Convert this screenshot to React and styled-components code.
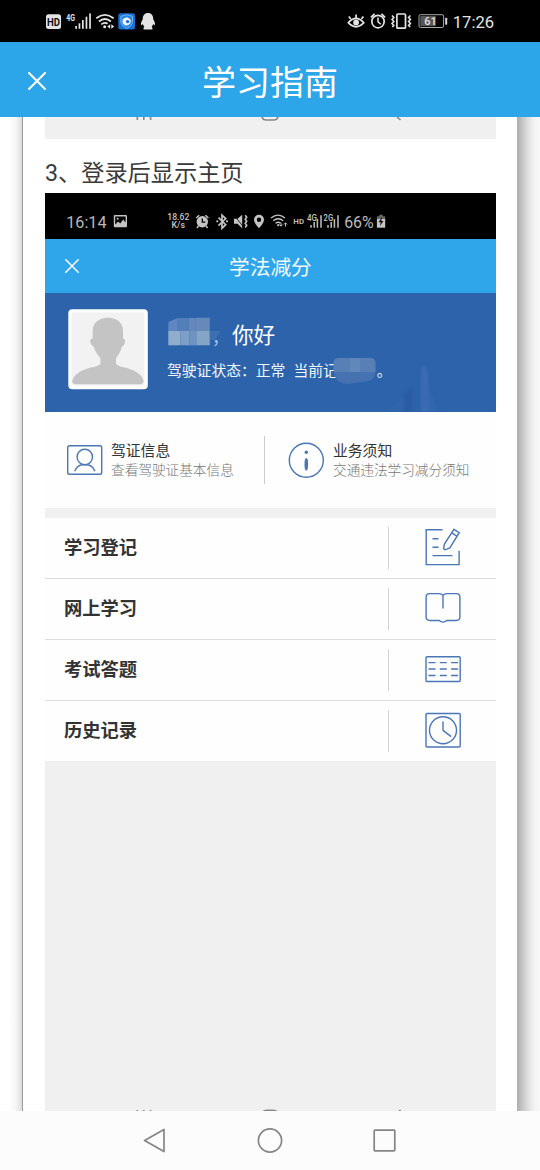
import React from 'react';
import styled, { createGlobalStyle } from 'styled-components';

const GlobalStyle = createGlobalStyle`
  * {
    box-sizing: border-box;
  }
  body {
    margin: 0;
    background: #fcfcfc;
    font-family: Roboto, "Noto Sans CJK SC", sans-serif;
  }
`;

const menuItems = [
  { label: '学习登记', icon: <RegisterIcon /> },
  { label: '网上学习', icon: <BookIcon /> },
  { label: '考试答题', icon: <ExamIcon /> },
  { label: '历史记录', icon: <ClockIcon /> },
];

function App() {
  return (
    <Screen>
      <GlobalStyle />
      <PhoneStatus />
      <Header>
        <CloseIcon size={18} thick={2} />
        <Title>学习指南</Title>
      </Header>
      <Viewport>
        <LeftShade />
        <Paper>
          <PreviousShot>
            <ShotNav viewBox="45 117 451 22" width="451" height="22">
              <path d="M137.3 117v3M143.8 117v3M150.6 117v3" />
              <path d="M262 117q1 3 4 3h8q3 0 4-3" />
              <path d="M397 117l3.5 3" />
            </ShotNav>
          </PreviousShot>
          <Step>3、登录后显示主页</Step>
          <Shot>
            <ShotStatus />
            <ShotHeader>
              <CloseIcon size={14} thick={1.5} />
              <ShotTitle>学法减分</ShotTitle>
            </ShotHeader>
            <Profile>
              <Avatar />
              <ProfileText>
                <Greeting>
                  <NameMosaic />
                  <Comma>，</Comma>
                  <span>你好</span>
                </Greeting>
                <Licence>
                  <span>驾驶证状态：正常</span>
                  <Score>当前记</Score>
                  <ScoreMosaic />
                  <span>。</span>
                </Licence>
              </ProfileText>
              <Tower viewBox="380 360 60 52" width="60" height="52">
                <path d="M383 412l10-6 8-8 5-2v16z" fill="#2f65ab" />
                <path d="M404 412v-18l8-6v24z" fill="#2a5ba3" />
                <path d="M421 412v-42l4-6 3 8 1 40z" fill="#3a6cb2" />
                <path d="M429 412v-24l4 10 5 14z" fill="#3266ae" />
              </Tower>
            </Profile>
            <Infos>
              <Info>
                <LicenceIcon />
                <div>
                  <InfoTitle>驾证信息</InfoTitle>
                  <InfoSub>查看驾驶证基本信息</InfoSub>
                </div>
              </Info>
              <InfoDivider />
              <Info>
                <NoticeIcon />
                <div>
                  <InfoTitle>业务须知</InfoTitle>
                  <InfoSub>交通违法学习减分须知</InfoSub>
                </div>
              </Info>
            </Infos>
            <Menu>
              {menuItems.map((item) => (
                <MenuRow key={item.label}>
                  <MenuLabel>{item.label}</MenuLabel>
                  <MenuIcon>{item.icon}</MenuIcon>
                </MenuRow>
              ))}
            </Menu>
            <ShotRest>
              <ShotNav viewBox="45 1105 451 6" width="451" height="6">
                <path d="M137.3 1110v1.5M143.8 1110v1.5M150.6 1110v1.5" />
                <path d="M263 1111.5q2-1.3 5-1.3h4q3 0 5 1.3" />
                <path d="M399 1111.5l1.5-1.5" />
              </ShotNav>
            </ShotRest>
          </Shot>
        </Paper>
        <RightShade />
      </Viewport>
      <NavBar>
        <svg viewBox="142 1127 26 28" width="26" height="28">
          <path d="M164 1129.4v22.2L144.6 1140.5z" />
        </svg>
        <svg viewBox="256 1127 28 28" width="28" height="28">
          <circle cx="270" cy="1140.5" r="11.6" />
        </svg>
        <svg viewBox="371 1127 28 28" width="28" height="28">
          <rect x="374.2" y="1130.2" width="20.6" height="20.6" rx="0.8" />
        </svg>
      </NavBar>
    </Screen>
  );
}

function CloseIcon({ size, thick }) {
  return (
    <svg viewBox="0 0 18 18" width={size} height={size}>
      <path
        d="M1 1l16 16M17 1L1 17"
        stroke="#fff"
        strokeWidth={(thick * 18) / size}
        strokeLinecap="round"
      />
    </svg>
  );
}

// Status bar of the phone itself
function PhoneStatus() {
  return (
    <StatusBar>
      <svg viewBox="40 8 120 26" width="120" height="26">
        <rect x="46" y="14.3" width="15" height="14.7" rx="2.5" fill="#e4e4e4" />
        <StatusText x="47" y="25.5" fill="#111" $size={10.5} $weight={700} textLength="13">HD</StatusText>
        <StatusText x="66.3" y="20.7" $size={9.5} $weight={700} textLength="8.7">4G</StatusText>
        <g fill="#e4e4e4">
          <rect x="75.3" y="26" width="1.7" height="2.8" />
          <rect x="78.6" y="23.3" width="1.7" height="5.5" />
          <rect x="82" y="20" width="1.7" height="8.8" />
          <rect x="85.6" y="16.7" width="1.7" height="12.1" />
          <rect x="89.2" y="13.4" width="1.7" height="15.4" />
          <circle cx="104.7" cy="26.8" r="1.5" />
          <path d="M107.3 26.5l2.9-2.3v4.6zM114.2 26.5l-2.9-2.3v4.6z" />
          <path d="M148 13c3.5 0 5.300 2.600 5.300 6.400 1.400 2.100 2 4.300 1.500 5.600-.4.500-1-.1-1.600-.9-.3 1.200-.9 2-1.600 2.800 1.300.6 1.500 2.600-.6 2.600h-6c-2.100 0-1.900-2-.6-2.600-.7-.8-1.300-1.600-1.600-2.800-.6.800-1.200 1.400-1.600.9-.5-1.300.1-3.500 1.500-5.600 0-3.800 1.800-6.400 5.300-6.400z" />
        </g>
        <g stroke="#e4e4e4" strokeWidth="1.8" fill="none">
          <path d="M96.3 18.2q8.5-6.7 17.3 0" />
          <path d="M98.9 21.5q6-4.9 12 0" />
          <path d="M101.3 24.4q3.5-2.7 6.3-.6" />
        </g>
        <rect x="118.3" y="13.2" width="16.7" height="16.4" rx="2.5" fill="#1870d5" />
        <path d="M126.7 14.7l5.8 1.6v6.2q-.5 3.8-5.8 6.100-5.300-2.300-5.800-6.100v-6.200z" fill="#2582e5" stroke="#8fc0f4" strokeWidth=".8" />
        <path d="M122.4 21.3q0-2.800 2.400-3.300l2.200-.8 2.200 1.300 1.800 1.800-.7 3q-2 2.700-4.900 2.200-3-1.200-3-4.200z" fill="#eef6ff" />
        <circle cx="127.6" cy="21.6" r="1.7" fill="#1870d5" />
      </svg>
      <svg viewBox="342 8 158 26" width="158" height="26">
        <g stroke="#e4e4e4" strokeWidth="1.7" fill="none">
          <path d="M348.3 22.7q7.7-8.6 15.5 0-7.8 8.2-15.5 0z" />
          <path d="M356.1 18v-3.400M350.8 19l-2-2.600M361.4 19l2-2.600" />
          <circle cx="378" cy="21.6" r="6.2" />
          <path d="M378 17.5v4.3l2.8 2.5" strokeWidth="1.5" />
          <path d="M370.9 17.3l3.6-3.4M385.1 17.3l-3.6-3.4" />
          <rect x="396.9" y="14" width="8.6" height="14.2" rx="1" />
          <path d="M392 15.5l1.8 2-1.8 2 1.8 2-1.8 2 1.8 2-1.6 1.5M410.4 15.5l-1.8 2 1.8 2-1.8 2 1.8 2-1.8 2 1.6 1.5" strokeWidth="1.6" />
        </g>
        <circle cx="356.1" cy="22.5" r="2.9" fill="#e4e4e4" />
        <rect x="419" y="14.7" width="24.6" height="12.8" rx="1.5" fill="none" stroke="#a8a8a8" />
        <rect x="420.3" y="16" width="15.5" height="10.2" fill="#565656" />
        <rect x="445.2" y="17.7" width="2" height="7" rx=".6" fill="#d8d8d8" />
        <StatusText x="424.3" y="25.4" $size={11.5} $weight={500} textLength="12.5">61</StatusText>
        <StatusText x="452.8" y="27.5" $size={16.7} textLength="41.3">17:26</StatusText>
      </svg>
    </StatusBar>
  );
}

// Status bar inside the embedded screen
function ShotStatus() {
  return (
    <ShotStatusBar>
      <svg viewBox="60 208 72 26" width="72" height="26">
        <StatusText x="66.2" y="227.6" $size={16.5} fill="#b9b9b9" textLength="40.3">16:14</StatusText>
        <path d="M115 215h10.8q1.2 0 1.2 1.2v9.9q0 1.2-1.2 1.2H115q-1.2 0-1.2-1.2v-9.9q0-1.2 1.2-1.2zm.2 1.6v8l3-3.2 2 2 3-4 2.4 3.2v-6z" fill="#c4c4c4" fillRule="evenodd" />
        <circle cx="117.6" cy="218.8" r="1" fill="#c4c4c4" />
      </svg>
      <svg viewBox="160 208 230 26" width="230" height="26">
        <StatusText x="167.3" y="220.2" $size={8.5} $weight={500} fill="#c4c4c4" textLength="22">18.62</StatusText>
        <StatusText x="171.5" y="228.3" $size={8.5} $weight={500} fill="#c4c4c4" textLength="13.5">K/s</StatusText>
        <circle cx="202.3" cy="221.8" r="5.7" fill="#c4c4c4" />
        <path d="M202.3 218.5v3.6h3" stroke="#000" strokeWidth="1.3" fill="none" />
        <path d="M196.2 218l3-2.8M208.4 218l-3-2.8M198.5 226l-1.5 2M206.1 226l1.5 2" stroke="#c4c4c4" strokeWidth="1.5" />
        <path d="M218.5 217.7l7.2 7-3.7 3.5v-13l3.7 3.4-7.2 7" stroke="#c4c4c4" strokeWidth="1.7" fill="none" />
        <circle cx="217.3" cy="221.3" r="1.1" fill="#c4c4c4" />
        <circle cx="227" cy="221.3" r="1.1" fill="#c4c4c4" />
        <path d="M234 218.8h3.5l4.7-4v13.4l-4.7-4.4H234z" fill="#c4c4c4" />
        <path d="M234 215l9.5 12" stroke="#000" strokeWidth=".8" />
        <path d="M245.2 215.3l1.5 2-1.5 2 1.5 2-1.5 2 1.5 2-1.5 2.2" stroke="#c4c4c4" strokeWidth="1.6" fill="none" />
        <path d="M259 214.7a5 5 0 015 5c0 3.4-5 8.4-5 8.4s-5-5-5-8.4a5 5 0 015-5zm0 2.9a2.2 2.2 0 100 4.4 2.2 2.2 0 000-4.4z" fill="#c4c4c4" />
        <g stroke="#c4c4c4" strokeWidth="1.4" fill="none">
          <path d="M271 218q7-5.8 14 0M273.2 220.7q5-3.9 10 0M275.5 223.3q2.8-2 5 0" />
          <path d="M281 222.5v3.5m-1.5-1.4l1.5 1.6 1.5-1.6M285.5 226.5v-3.5m-1.5 1.4l1.5-1.6 1.5 1.6" strokeWidth="1" />
        </g>
        <circle cx="278.2" cy="225.2" r="1.1" fill="#c4c4c4" />
        <StatusText x="293.3" y="224" $size={8} $weight={700} fill="#b9b9b9" textLength="10.8">HD</StatusText>
        <StatusText x="307" y="220.8" $size={8.7} $weight={500} fill="#c4c4c4" textLength="10">4G</StatusText>
        <path d="M311 225v2.7M314.2 222v5.7M317.4 219v8.7M321 215.3v12.4" stroke="#b4b4b4" strokeWidth="1.6" />
        <StatusText x="323.6" y="220.8" $size={8.7} $weight={500} fill="#c4c4c4" textLength="9.5">2G</StatusText>
        <path d="M328 225v2.7M331.2 222v5.7M334.4 219v8.7M338 215.3v12.4" stroke="#b4b4b4" strokeWidth="1.6" />
        <StatusText x="344.2" y="227.6" $size={16.5} fill="#b9b9b9" textLength="29.5">66%</StatusText>
        <path d="M379.3 214.7h3.5v1.5h2.4v3.5h-8.3v-3.500h2.400z" fill="#666" />
        <path d="M376.9 219h8.3v8.7h-8.3z" fill="#c4c4c4" />
        <path d="M382 217l-3.5 5.3h2.2l-.8 3.7 3.6-5h-2.2z" fill="#111" />
      </svg>
    </ShotStatusBar>
  );
}

function Avatar() {
  return (
    <svg viewBox="68 309 80 81" width="80" height="81">
      <rect x="68.3" y="309.3" width="79.5" height="80" rx="4" fill="#fff" />
      <rect x="71.5" y="312.5" width="73" height="73" rx="2" fill="#f2f2f2" />
      <path
        d="M108 317.7c9 0 14.8 5 15 12.5v8.3c2.5.6 2.6 2.7 1.6 5-.7 1.7-1.4 2.5-2.4 2.8-1.5 5.2-4 9-6.2 12.2v5.3c2.5 3.2 7.5 3 13 5 7.5 2.500 12.800 6.200 14.300 11.200.8 2.800-.8 4.200-3.500 4.200H76.500c-2.900 0-4.800-1.400-4-4.200 1.700-5 7-8.700 14.500-11.200 5.500-2 11-1.800 13.500-5v-5.300c-2.400-3.200-5.500-7-7-12.200-1-.3-2-1.100-2.700-2.800-1-2.300-1-4.400 1.900-5v-8.300c.2-7.500 6.300-12.500 15.300-12.500z"
        fill="#c4c4c4"
      />
    </svg>
  );
}

function NameMosaic() {
  return (
    <svg viewBox="168 317 53 29" width="53" height="29">
      <path d="M168.3 322l9.5-4v13h-9.5z" fill="#5f86c0" />
      <path d="M177.8 318h11v13h-11z" fill="#547eb9" />
      <path d="M188.8 318h7v13h-7z" fill="#6488bd" />
      <path d="M195.8 317.7h14v13.3h-14z" fill="#6689b9" />
      <path d="M168.3 331h12v14.3h-12z" fill="#91adcd" />
      <path d="M180.3 331h9v14.3h-9z" fill="#7d9fc7" />
      <path d="M189.3 331h7v14.3h-7z" fill="#6e93c1" />
      <path d="M196.3 331h13.5v14.3h-13.5z" fill="#85a5c7" />
      <path d="M209.8 331h11l-6 9h-5z" fill="#3d70b1" />
    </svg>
  );
}

function ScoreMosaic() {
  return (
    <MosaicOver viewBox="333 358 44 28" width="44" height="28">
      <path d="M333.5 364q0-5 5-5h32q5 0 5 5v9h-42z" fill="#5880b6" />
      <path d="M350 359h10v14h-10z" fill="#6287ba" />
      <path d="M333.5 373h42q-1 8-7 9l-22 3q-11-1-13-12z" fill="#4672b1" />
    </MosaicOver>
  );
}

function LicenceIcon() {
  return (
    <LineIcon viewBox="66 441 38 38" width="38" height="38">
      <rect x="67.7" y="445.7" width="34" height="28.6" rx="1.8" />
      <circle cx="84.8" cy="457" r="7.7" />
      <path d="M74.7 471.3q2.3-6.2 8-6.6h4.2q5.7.4 8 6.6" />
    </LineIcon>
  );
}

function NoticeIcon() {
  return (
    <LineIcon viewBox="287 441 38 38" width="38" height="38">
      <circle cx="306.3" cy="460.2" r="17" />
      <circle cx="306.3" cy="452.2" r="1.7" fill="#4a76b5" stroke="none" />
      <path d="M306.3 458q1.8 0 1.8 6.3t-1.8 6.3-1.8-6.3 1.8-6.3z" fill="#4a76b5" stroke="none" />
    </LineIcon>
  );
}

function RegisterIcon() {
  return (
    <LineIcon viewBox="423 526 40 42" width="40" height="42">
      <path d="M442.5 529.7h-16.3v34.9h32.9v-13.8" />
      <path d="M432.5 538.7h6M432.5 547.2h6M432.5 555.6h20" />
      <path d="M454 529.3l5.2 3.4-9.3 15.2-4.8 1.9-1.5-1.2.8-4.5z" />
      <path d="M451.7 532.8l5.2 3.3" />
    </LineIcon>
  );
}

function BookIcon() {
  return (
    <LineIcon viewBox="423 587 40 42" width="40" height="42">
      <path d="M443 608.5v-13q-1-1.9-4-1.9h-9.3q-3.6 0-3.6 3.6v19.9q0 3.4 3.6 3.4h9.6q1.6 1.6 3.7 1.6t3.7-1.6h9.6q3.6 0 3.6-3.4v-19.9q0-3.6-3.6-3.6H447q-3 0-4 1.9" />
    </LineIcon>
  );
}

function ExamIcon() {
  return (
    <LineIcon viewBox="423 648 40 42" width="40" height="42">
      <rect x="426" y="656.8" width="34.2" height="24.7" rx="1" />
      <path d="M428.5 662.6h31M428.5 669h31M428.5 675.5h31" strokeDasharray="7 4.3" />
    </LineIcon>
  );
}

function ClockIcon() {
  return (
    <LineIcon viewBox="423 709 40 42" width="40" height="42">
      <rect x="426" y="713.5" width="34.2" height="33.5" rx="1" />
      <circle cx="443" cy="730.2" r="13.5" />
      <path d="M443 721.5v8.9l8.2 6.2" />
    </LineIcon>
  );
}

const Screen = styled.div`
  display: flex;
  flex-direction: column;
  width: 540px;
  height: 1170px;
  overflow: hidden;
`;

const StatusBar = styled.div`
  display: flex;
  justify-content: space-between;
  flex: none;
  height: 42px;
  padding: 8px 40px 0;
  background: #000;
`;

const StatusText = styled.text.attrs({ lengthAdjust: 'spacingAndGlyphs' })`
  font-size: ${(props) => props.$size}px;
  font-weight: ${(props) => props.$weight || 400};
  fill: ${(props) => props.fill || '#e4e4e4'};
`;

const Header = styled.div`
  display: grid;
  grid-template-columns: 174px 1fr;
  align-items: center;
  flex: none;
  height: 75px;
  padding: 2px 0 0 28px;
  background: #2ca6e9;
`;

const Title = styled.div`
  color: #fff;
  font-size: 34px;
  line-height: 40px;
  padding-top: 4px;
`;

const Viewport = styled.div`
  display: flex;
  flex: none;
  height: 994px;
  overflow: hidden;
  background: #fff;
`;

const LeftShade = styled.div`
  width: 23px;
  border-right: 1px solid #999;
  background: linear-gradient(to right, #fff 8px, #f6f6f6 16px, #dcdcdc);
`;

const RightShade = styled.div`
  width: 23px;
  background: linear-gradient(to right, #adadad, #c4c4c4 5px, #dedede 11px, #f3f3f3 17px, #f8f8f8);
`;

const Paper = styled.div`
  display: flex;
  flex-direction: column;
  width: 494px;
  padding: 0 21px 0 22px;
  background: #fff;
`;

const PreviousShot = styled.div`
  flex: none;
  height: 22px;
  background: #f0f0f0;
`;

const ShotNav = styled.svg`
  display: block;
  fill: none;
  stroke: #888;
  stroke-width: 1.6;
`;

const Step = styled.div`
  flex: none;
  height: 54px;
  padding-top: 17px;
  color: #3a3a3a;
  font-size: 23.2px;
  line-height: 34px;
`;

const Shot = styled.div`
  display: flex;
  flex-direction: column;
  flex: 1;
`;

const ShotStatusBar = styled.div`
  display: flex;
  gap: 28px;
  height: 46px;
  padding: 15px 0 0 15px;
  background: #000;
`;

const ShotHeader = styled.div`
  display: grid;
  grid-template-columns: 164px 1fr;
  align-items: center;
  height: 54px;
  padding-left: 20px;
  background: #2ea6e9;
`;

const ShotTitle = styled.div`
  padding-top: 3px;
  color: #f3fbff;
  font-size: 20.7px;
  line-height: 30px;
`;

const Profile = styled.div`
  display: flex;
  height: 119px;
  padding: 16px 0 0 23px;
  overflow: hidden;
  background: #2d63ab;
`;

const ProfileText = styled.div`
  display: flex;
  flex-direction: column;
  width: 213px;
  margin-left: 19px;
`;

const Greeting = styled.div`
  display: flex;
  align-items: center;
  height: 50px;
  padding: 3px 0 0 1px;
  color: #fff;
  font-size: 21.6px;
  line-height: 30px;

  svg {
    flex: none;
    margin: -8px -8px 0 0;
  }
`;

const Comma = styled.span`
  width: 20px;
  margin-left: -1px;
  padding-top: 5px;
  color: #a9c4e2;
  font-size: 17px;
`;

const Licence = styled.div`
  display: flex;
  align-items: center;
  height: 24px;
  color: #f0f8fb;
  font-size: 14.8px;
  line-height: 24px;
  white-space: nowrap;
`;

const Score = styled.span`
  margin-left: 8px;
`;

const MosaicOver = styled.svg`
  flex: none;
  margin-left: -5px;
`;

const Tower = styled.svg`
  align-self: flex-end;
  filter: blur(1.5px);
`;

const Infos = styled.div`
  display: grid;
  grid-template-columns: 219px 1px 1fr;
  height: 96px;
  background: #fefefe;
`;

const Info = styled.div`
  display: flex;
  gap: 7px;
  padding: 29px 0 0 21px;
  white-space: nowrap;
`;

const InfoDivider = styled.div`
  height: 48px;
  margin-top: 24px;
  background: #ccc;

  & + ${Info} {
    gap: 8px;
    padding-left: 22px;
  }
`;

const InfoTitle = styled.div`
  padding-top: 1px;
  color: #333;
  font-size: 14.8px;
  line-height: 19px;
`;

const InfoSub = styled.div`
  color: #777;
  font-size: 13.65px;
  font-weight: 300;
  line-height: 18px;
`;

const Menu = styled.div`
  border-top: 10px solid #f0f0f0;
  background: #fefefe;
`;

const MenuRow = styled.div`
  display: grid;
  grid-template-columns: 343px 108px;
  height: 61px;
  padding: 9px 0;
  border-bottom: 1px solid #dcdcdc;

  &:last-child {
    height: 60px;
    border-bottom: none;
  }
`;

const MenuLabel = styled.div`
  padding-left: 19px;
  color: #333;
  font-size: 18.3px;
  font-weight: 700;
  line-height: 42px;
`;

const MenuIcon = styled.div`
  height: 42px;
  padding-left: 34px;
  border-left: 1px solid #d4d4d4;

  svg {
    margin-top: -1px;
  }
`;

const LineIcon = styled.svg`
  display: block;
  flex: none;
  fill: none;
  stroke: #4a76b5;
  stroke-width: 1.4;
`;

const ShotRest = styled.div`
  display: flex;
  flex: 1;
  align-items: flex-end;
  background: #f0f0f0;
`;

const NavBar = styled.div`
  display: flex;
  justify-content: space-between;
  flex: none;
  height: 59px;
  padding: 16px 141px 0 142px;
  background: #fcfcfc;

  svg {
    fill: none;
    stroke: #858585;
    stroke-width: 1.7;
    stroke-linejoin: round;
  }
`;

export default App;
